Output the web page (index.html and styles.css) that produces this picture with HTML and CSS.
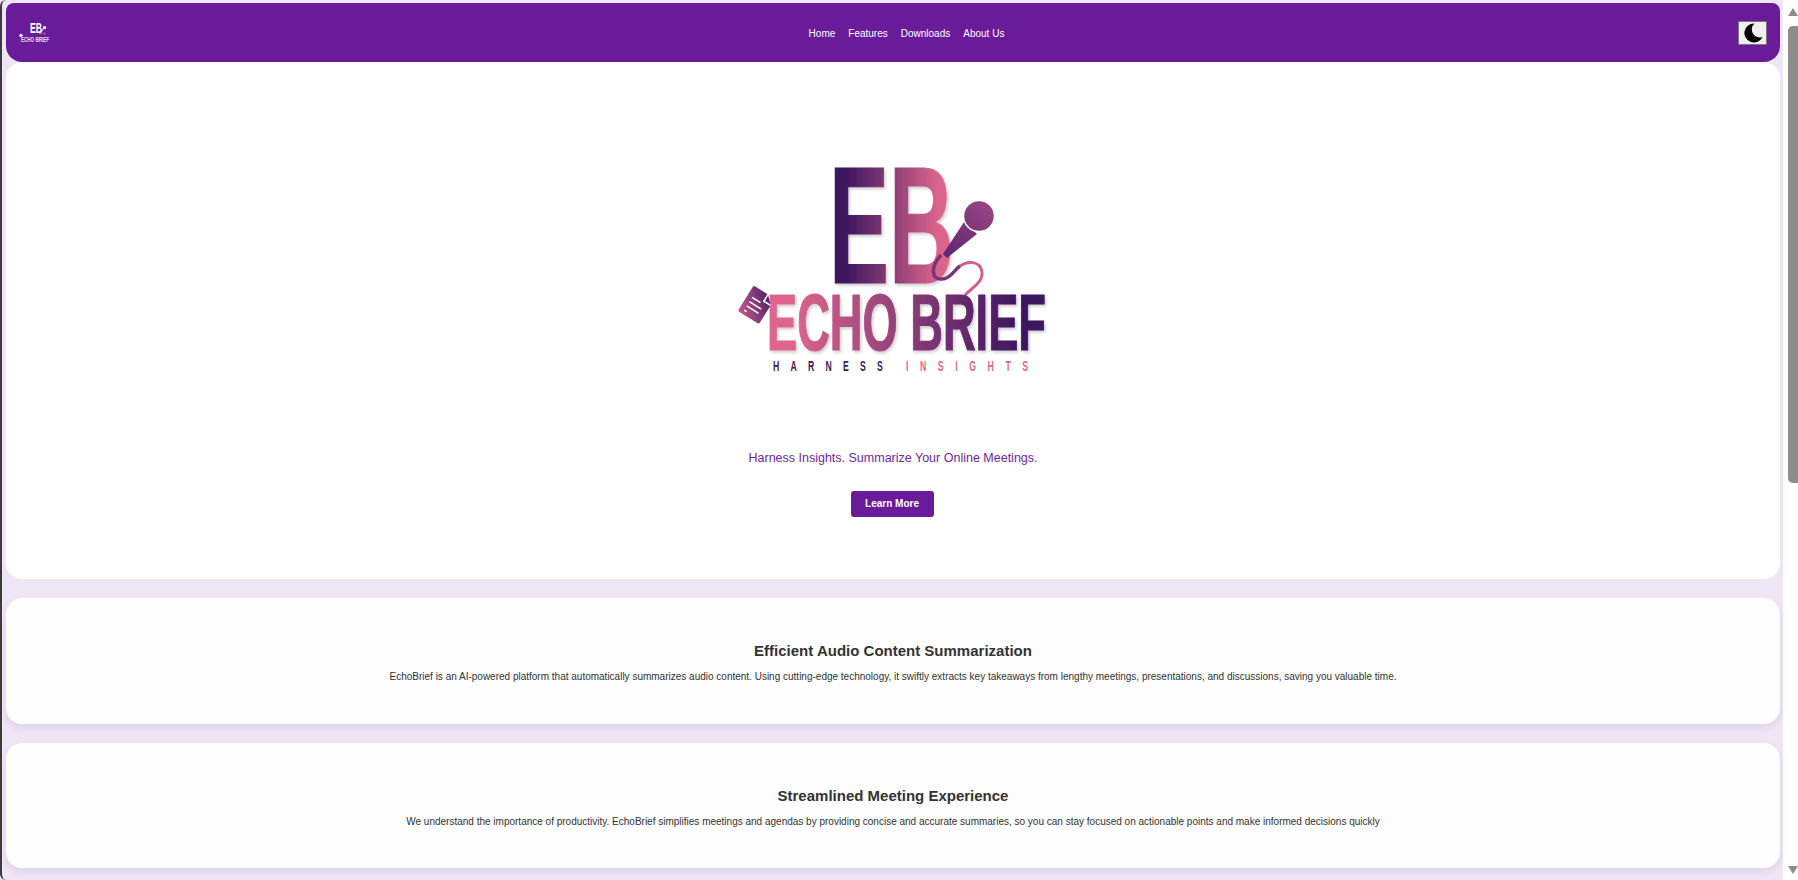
FILE: index.html
```html
<!DOCTYPE html>
<html>
<head>
<meta charset="utf-8" />
<title>EchoBrief</title>
<link rel="stylesheet" href="styles.css">
</head>

<body>
<div class="page">
	<div class="content">
		<header class="nav">
			<svg class="nav-logo" width="34" height="30" viewBox="0 -2 34 30">
				<text class="mini-eb" x="12" y="13.5" textLength="12" lengthAdjust="spacingAndGlyphs">EB</text>
				<path d="M22 14 L26 9" stroke="#fff" stroke-width="1.2" />
				<circle cx="26.5" cy="8.5" r="1.6" fill="#fff" />
				<path d="M21 15 C24 15 28 12 27 16" stroke="#c9a8dc" stroke-width="0.6" fill="none" />
				<rect x="1.5" y="15" width="3" height="3" fill="#fff" transform="rotate(30 3 16.5)" />
				<text class="mini-name" x="3" y="22.5" textLength="28" lengthAdjust="spacingAndGlyphs">ECHO BRIEF</text>
			</svg>
			<nav class="nav-links">
				<a>Home</a>
				<a>Features</a>
				<a>Downloads</a>
				<a>About Us</a>
			</nav>
			<button class="theme-btn">
				<svg width="20" height="20" viewBox="0 0 20 20"><path d="M11.5 0.5 A9.5 9.5 0 1 0 19.5 14 A8 8 0 0 1 11.5 0.5 Z" fill="#000" /></svg>
			</button>
		</header>

		<section class="hero">
			<svg class="logo" width="600" height="340" viewBox="593 100 600 340">
				<defs>
					<linearGradient id="ebGrad" gradientUnits="userSpaceOnUse" x1="835" y1="0" x2="950" y2="0">
						<stop offset="0.1" stop-color="#3e1760" />
						<stop offset="0.9" stop-color="#dc648c" />
					</linearGradient>
					<linearGradient id="nameGrad" gradientUnits="userSpaceOnUse" x1="768" y1="0" x2="1045" y2="0">
						<stop offset="0.08" stop-color="#de668e" />
						<stop offset="0.9" stop-color="#3e1760" />
					</linearGradient>
					<linearGradient id="micGrad" gradientUnits="userSpaceOnUse" x1="945" y1="260" x2="992" y2="205">
						<stop offset="0" stop-color="#5a2570" />
						<stop offset="1" stop-color="#9a4584" />
					</linearGradient>
					<linearGradient id="docGrad" gradientUnits="userSpaceOnUse" x1="742" y1="318" x2="768" y2="290">
						<stop offset="0" stop-color="#c65c8c" />
						<stop offset="1" stop-color="#4a1d66" />
					</linearGradient>
					<filter id="soft" x="-10%" y="-10%" width="125%" height="125%">
						<feDropShadow dx="1.5" dy="2" stdDeviation="1.5" flood-color="#000" flood-opacity="0.2" />
					</filter>
				</defs>
				<text class="logo-eb" x="829" y="283" textLength="125" lengthAdjust="spacingAndGlyphs" fill="url(#ebGrad)" stroke="url(#ebGrad)" stroke-width="1" filter="url(#soft)">EB</text>
				<path d="M960 266 C967 261 980 260 982 272 C983 282 973 287 965 295" stroke="#d0608c" stroke-width="3" fill="none" />
				<path d="M941 255 C931 266 931 278 940 279 C950 280 954 270 960 266" stroke="#7a3576" stroke-width="3.5" fill="none" />
				<path d="M943 254 L964 222 L977 234 L947 258 Z" fill="url(#micGrad)" />
				<circle cx="979" cy="216" r="15.5" fill="url(#micGrad)" stroke="#fff" stroke-width="1.5" />
				<text class="logo-name" x="767" y="350" textLength="279" lengthAdjust="spacingAndGlyphs" fill="url(#nameGrad)" stroke="url(#nameGrad)" stroke-width="1.2" filter="url(#soft)">ECHO BRIEF</text>
				<g transform="rotate(32 755 304)">
					<path d="M746 289 H761 L769 297 V317 Q769 319 767 319 H746 Q744 319 744 317 V291 Q744 289 746 289 Z" fill="url(#docGrad)" />
					<path d="M761 289 V297 H769" stroke="#fff" stroke-width="1.5" fill="none" />
					<path d="M749 300 H759 M749 305 H763 M749 310 H763 M749 315 H752" stroke="#fff" stroke-width="1.5" />
				</g>
				<text class="logo-sub dark" transform="translate(773 371) scale(0.62 1)" textLength="177">HARNESS</text>
				<text class="logo-sub pink" transform="translate(906 371) scale(0.62 1)" textLength="197">INSIGHTS</text>
			</svg>
			<p class="tagline">Harness Insights. Summarize Your Online Meetings.</p>
			<a class="learn-btn">Learn More</a>
		</section>

		<section class="card">
			<h2>Efficient Audio Content Summarization</h2>
			<p>EchoBrief is an AI-powered platform that automatically summarizes audio content. Using cutting-edge technology, it swiftly extracts key takeaways from lengthy meetings, presentations, and discussions, saving you valuable time.</p>
		</section>

		<section class="card">
			<h2>Streamlined Meeting Experience</h2>
			<p>We understand the importance of productivity. EchoBrief simplifies meetings and agendas by providing concise and accurate summaries, so you can stay focused on actionable points and make informed decisions quickly</p>
		</section>
	</div>

	<div class="scrollbar">
		<span class="arrow up"></span>
		<div class="track"><div class="thumb"></div></div>
		<span class="arrow down"></span>
	</div>
</div>
</body>
</html>
```

FILE: styles.css
```css
*{margin:0; padding:0; box-sizing:border-box;}
html,body{height:100%; overflow:hidden;}
body{background:#efe6f5; font-family:"Liberation Sans", Arial, sans-serif; color:#333;}

.page{display:flex; height:880px; border-left:2px solid #3c3c3c; border-radius:6px 0 0 6px;}
.content{flex:1; min-width:0; padding:3px 3px 0 4px;}

.nav{display:flex; align-items:center; justify-content:space-between; height:59px; padding:0 13px 0 12px; background:#6a1b9a; border-radius:8px 8px 16px 16px;}
.nav-logo{display:block; margin-top:-2px;}
.mini-eb{font:bold 15px "Liberation Sans", sans-serif; fill:#fff;}
.mini-name{font:bold 7px "Liberation Sans", sans-serif; fill:#ecdff3;}
.nav-links{display:flex; gap:13px; margin-left:23px; padding-top:1px; font-size:10px; color:#fff;}
.theme-btn{display:flex; align-items:center; justify-content:center; width:29px; height:24px; background:#efefef; border:1px solid #767676;}

.hero{display:flex; flex-direction:column; align-items:center; height:517px; padding-top:38px; background:#fff; border-radius:16px;}
.logo{display:block;}
.logo-eb{font:bold 167px "Liberation Sans", sans-serif;}
.logo-name{font:bold 79px "Liberation Sans", sans-serif;}
.logo-sub{font:bold 14px "Liberation Sans", sans-serif;}
.logo-sub.dark{fill:#3e1760;}
.logo-sub.pink{fill:#de668e;}
.tagline{margin-top:9px; font-size:12.5px; line-height:18px; color:#7028a0;}
.learn-btn{margin-top:24px; margin-left:-2px; width:83px; height:26px; line-height:26px; text-align:center; font-size:10px; font-weight:bold; color:#fff; background:#6a1b9a; border-radius:3px;}

.card{height:125.5px; margin-top:19px; padding-top:44px; text-align:center; background:#fdfdfd; border-radius:16px; box-shadow:0 4px 8px rgba(80,40,120,0.1);}
.card h2{font-size:15px; line-height:18px; font-weight:bold;}
.card p{margin-top:10px; font-size:10px; line-height:13px;}

.scrollbar{display:flex; flex-direction:column; align-items:flex-end; width:15px; background:#fff;}
.arrow{display:block; width:0; height:0; border-left:5px solid transparent; border-right:5px solid transparent;}
.arrow.up{margin-top:8px; border-bottom:8px solid #8c8c8c;}
.arrow.down{margin-bottom:6px; border-top:8px solid #8c8c8c;}
.track{flex:1; width:10px; padding-top:10px;}
.thumb{height:457px; background:#8c8c8c; border-radius:5px 0 0 5px;}
```
